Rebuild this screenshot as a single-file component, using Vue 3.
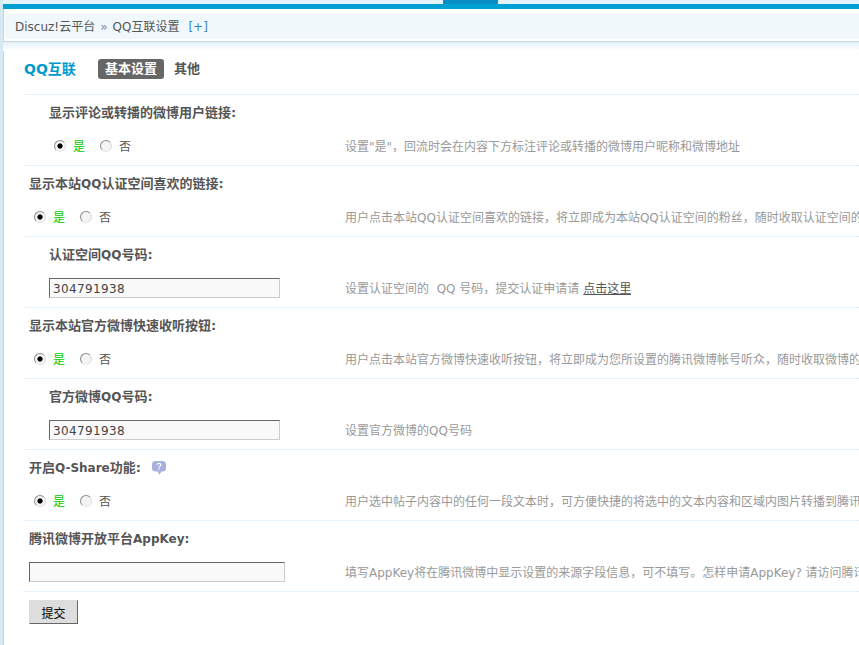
<script setup>
const rows = [
  { title: '显示评论或转播的微博用户链接:', indent: true, type: 'radio', desc: '设置"是"，回流时会在内容下方标注评论或转播的微博用户昵称和微博地址' },
  { title: '显示本站QQ认证空间喜欢的链接:', type: 'radio', desc: '用户点击本站QQ认证空间喜欢的链接，将立即成为本站QQ认证空间的粉丝，随时收取认证空间的更新' },
  { title: '认证空间QQ号码:', indent: true, type: 'input', value: '304791938', desc: '设置认证空间的  QQ 号码，提交认证申请请', link: '点击这里' },
  { title: '显示本站官方微博快速收听按钮:', type: 'radio', desc: '用户点击本站官方微博快速收听按钮，将立即成为您所设置的腾讯微博帐号听众，随时收取微博的更新' },
  { title: '官方微博QQ号码:', indent: true, type: 'input', value: '304791938', desc: '设置官方微博的QQ号码' },
  { title: '开启Q-Share功能:', help: true, type: 'radio', desc: '用户选中帖子内容中的任何一段文本时，可方便快捷的将选中的文本内容和区域内图片转播到腾讯微博' },
  { title: '腾讯微博开放平台AppKey:', type: 'input', wide: true, value: '', desc: '填写AppKey将在腾讯微博中显示设置的来源字段信息，可不填写。怎样申请AppKey? 请访问腾讯微博开放平台' }
].map(r => ({ ...r, parts: r.title.split(/([A-Za-z-]+:?)/) }))
</script>

<template>
  <div class="page">
    <div class="topstrip"><span class="toptab"></span></div>
    <div class="bluebar"></div>
    <div class="crumbwrap">
      <div class="crumb">Discuz!云平台<span class="sep">»</span>QQ互联设置<a class="plus">[+]</a></div>
    </div>
    <div class="shade"></div>
    <div class="main">
      <div class="head">
        <h3>QQ互联</h3>
        <span class="pill">基本设置</span>
        <span class="other">其他</span>
      </div>
      <form class="list" @submit.prevent>
        <div v-for="(r, i) in rows" :key="i" class="row" :class="{ indent: r.indent }">
          <div class="title">
            <b><span v-for="(p, k) in r.parts" :key="k" :class="{ lat: k % 2 === 1 }">{{ p }}</span></b>
            <svg v-if="r.help" class="help" width="14" height="14" viewBox="0 0 14 14">
              <path d="M3.500 0h7A3.500 3.500 0 0 1 14 3.500v3.500a3.500 3.500 0 0 1-3.500 3.500H9.500L7 14 6 10.500H3.500A3.500 3.500 0 0 1 0 7V3.500A3.500 3.500 0 0 1 3.500 0z" fill="#aab0dd"/>
              <path d="M5.200 3.800a1.800 1.500 0 1 1 2.700 1.400c-.6.300-.9.600-.9 1.200" fill="none" stroke="#fff" stroke-width="1.200"/>
              <rect x="6.400" y="7.300" width="1.300" height="1.300" fill="#fff"/>
            </svg>
          </div>
          <div class="body">
            <div class="field">
              <div v-if="r.type === 'radio'" class="radios">
                <label class="yes"><input type="radio" :name="'r' + i" checked>是</label>
                <label class="no"><input type="radio" :name="'r' + i">否</label>
              </div>
              <input v-else class="text" :class="{ wide: r.wide }" type="text" :value="r.value">
            </div>
            <div class="desc">{{ r.desc }}<a v-if="r.link">{{ r.link }}</a></div>
          </div>
        </div>
        <div class="submit"><button type="submit">提交</button></div>
      </form>
    </div>
  </div>
</template>

<style>
html, body { margin: 0; overflow: hidden; background: #fff; }
</style>

<style scoped>
.page {
  width: 859px;
  height: 645px;
  overflow: hidden;
  box-sizing: border-box;
  border-left: 3px solid #d6eaf4;
  box-shadow: inset 1px 0 0 #bfd6e1;
  font: 12px/18px "DejaVu Sans", "Noto Sans CJK SC", sans-serif;
  color: #666;
}
.topstrip { height: 4px; background: #e6f3fa; }
.toptab { display: block; width: 55px; height: 4px; margin-left: 440px; background: #0a8fc4; }
.bluebar { height: 5px; background: #009fd4; }
.crumbwrap { margin-left: -3px; padding: 5px 0 2px 5px; border-bottom: 1px solid #c5d6df; }
.crumb { height: 25px; line-height: 27px; padding-left: 10px; background: #f0f8fc; color: #555; }
.sep { color: #7a8ea0; margin: 0 5px; }
.plus { color: #3a86c0; margin-left: 9px; }
.shade { height: 9px; background: linear-gradient(#e4f0f8, #fff); }
.main { padding: 0 0 0 21px; }
.head { display: flex; align-items: center; height: 44px; box-sizing: border-box; padding-bottom: 7px; border-bottom: 1px dotted #d5e8f3; }
.head h3 { margin: 0 21px 0 0; width: 53px; font-size: 14px; font-weight: bold; color: #09c; white-space: nowrap; }
.pill { background: #666; color: #fff; font-size: 13px; font-weight: bold; line-height: 20px; padding: 0 7px; border-radius: 3px; margin-right: 10px; white-space: nowrap; }
.other { font-size: 13px; font-weight: bold; color: #555; }
.row { height: 71px; box-sizing: border-box; padding-left: 5px; border-bottom: 1px dotted #d5e8f3; }
.row.indent { padding-left: 25px; }
.title { height: 18px; padding-top: 9px; display: flex; align-items: center; color: #555; white-space: nowrap; font-size: 13px; }
.title b { font-weight: bold; }
.lat { font-size: 12px; }
.help { margin-left: 11px; margin-top: -1px; }
.body { display: flex; align-items: center; height: 38px; margin-top: 5px; white-space: nowrap; }
.field { width: 316px; flex: none; }
.indent .field { width: 296px; }
.radios { display: flex; padding-left: 5px; }
.radios label { display: flex; align-items: center; padding-top: 2px; }
.radios input {
  appearance: none;
  width: 12px;
  height: 12px;
  margin: -3px 7px 0 0;
  box-sizing: border-box;
  border-radius: 50%;
  border: 1px solid;
  border-color: #8d8d8d #dcdcdc #e6e6e6 #8d8d8d;
  background: #f4f4f4;
}
.radios input:checked { background: radial-gradient(circle, #000 0 2.200px, #f4f4f4 3px); }
.yes { color: #0c0; margin-right: 15px; }
.no { color: #555; }
.text {
  display: block;
  box-sizing: border-box;
  width: 231px;
  height: 20px;
  padding: 2px 3px 0;
  font: inherit;
  letter-spacing: .35px;
  color: #444;
  background: #f9f9f9;
  border: 1px solid;
  border-color: #666 #ccc #ccc #666;
  outline: 0;
}
.text.wide { width: 256px; }
.desc { color: #999; overflow: hidden; white-space: pre; padding-top: 2px; }
.desc a { color: #555; text-decoration: underline; margin-left: 4px; }
.submit { padding: 8px 0 0 5px; }
button {
  display: block;
  width: 49px;
  height: 24px;
  padding: 0;
  font: 12px "DejaVu Sans", "Noto Sans CJK SC", sans-serif;
  color: #000;
  background: #ddd;
  border: 1px solid;
  border-color: #ddd #666 #666 #ddd;
}
</style>
